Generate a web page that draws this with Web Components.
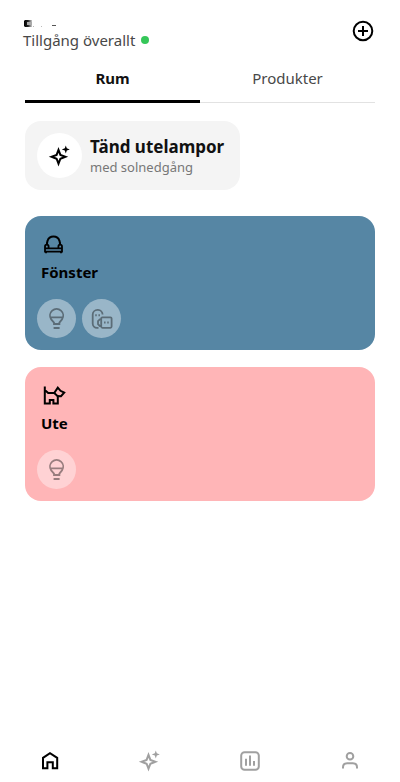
<!DOCTYPE html>
<html lang="sv">
<head>
<meta charset="utf-8">
<meta name="viewport" content="width=device-width, initial-scale=1">
<title>Hem</title>
<style>
  html, body { margin: 0; background: #fff; }
  body { font-family: "Noto Sans", sans-serif; color: #111; }
</style>
</head>
<body>
<home-app></home-app>
<script>
const ICONS = {
  plus: '<circle cx="12" cy="12" r="9.3"/><path d="M12 7v10M7 12h10"/>',
  sparkle: '<path d="M10.5 5.9 12.4 10.9 17.4 12.8 12.4 14.7 10.5 19.7 8.6 14.7 3.6 12.8 8.6 10.9Z"/><path fill="currentColor" stroke="none" d="M17.8 1.4 18.8 4.3 21.8 5.4 18.8 6.5 17.8 9.4 16.8 6.5 13.8 5.4 16.8 4.3Z"/>',
  armchair: '<path d="M6.2 13a6.2 6.2 0 0 1 .3-4A6.3 6.3 0 0 1 18.5 9a6.2 6.2 0 0 1 .3 4"/><path stroke-width="1.8" d="M4 19.6v-5.2a1.8 1.8 0 0 1 3.6 0v2h9.8v-2a1.8 1.8 0 0 1 3.6 0v5.2ZM4 16.4h17M5 19v2.2M20 19v2.2"/>',
  dog: '<path d="M3.8 3.6V20.4H8.8V17h3.6v3.4h4.4V13l3.2.2 3.2-3.6-3.7-1.8-2.7-3.1-3.6 5.4H7.2L3.8 7"/><path d="m13.2 10.1 3.6 3.2"/>',
  bulb: '<g stroke-width="1.8"><path d="M9 17v-1.4L6.2 12.4A6.6 6.6 0 1 1 17 12.4L14.4 15.6V17ZM5 10.3h13.2M8.6 21h6"/></g>',
  plug: '<g stroke-width="1.8"><path d="M8.5 20.8H7A4.3 4.3 0 0 1 2.7 16.5V7.7A4.8 4.8 0 0 1 7.5 2.9h.5A4.8 4.8 0 0 1 12.6 7.5"/><rect x="11.2" y="10.4" width="10.4" height="10.4" rx="1.2"/><path d="M11.2 12.4H9.8l-1.8 1.8v3l1.8 1.8h1.4"/><path stroke-width="1.5" d="M6 7.3v2M9.2 7.3v2M14.8 14.6v2M18 14.6v2"/></g>',
  home: '<path d="M5 19.2V8.8L12 4.1l7.2 4.7V19.2h-4.4v-6H9.4v6Z"/>',
  chart: '<rect x="3.2" y="3.2" width="17.6" height="17.6" rx="3.4"/><path d="M8 9.7v7M12 6.5v10.2M16 11.9v4.8"/>',
  person: '<circle cx="12" cy="7.2" r="3.3"/><path d="M5 19.5v-1.3c0-2.4 1.8-4 4.2-4h5.6c2.4 0 4.2 1.6 4.2 4v1.3"/>'
};

function define(name, html) {
  const template = document.createElement('template');
  template.innerHTML = html;
  customElements.define(name, class extends HTMLElement {
    constructor() {
      super();
      this.attachShadow({ mode: 'open' }).append(template.content.cloneNode(true));
    }
  });
}

customElements.define('ui-icon', class extends HTMLElement {
  constructor() {
    super();
    this.attachShadow({ mode: 'open' });
  }
  connectedCallback() {
    this.shadowRoot.innerHTML = `
      <style>
        :host { display: block; flex: none; width: 24px; height: 24px; }
        svg { display: block; width: 100%; height: 100%; overflow: visible; }
      </style>
      <svg viewBox="0 0 24 24" fill="none" stroke="currentColor" stroke-width="2" aria-hidden="true">${ICONS[this.getAttribute('name')]}</svg>`;
  }
});

define('home-header', `
  <style>
    :host { display: flex; justify-content: space-between; padding: 19px 25px 0 23px; }
    svg { display: block; width: 50px; height: 10px; }
    .status { display: flex; align-items: center; gap: 6px; font-size: 15px; line-height: 22px; color: #484848; }
    .dot { width: 8px; height: 8px; border-radius: 50%; background: #35c759; }
    button { align-self: flex-start; margin: 0; padding: 0; border: 0; background: none; color: #000; }
  </style>
  <div>
    <svg viewBox="0 0 50 10" aria-hidden="true">
      <defs>
        <linearGradient id="fade"><stop offset="0" stop-color="#000"/><stop offset=".5" stop-color="#222"/><stop offset="1" stop-color="#ccc"/></linearGradient>
      </defs>
      <path d="M1 2 2 1h7v7H2L1 7Z" fill="url(#fade)"/>
      <path d="M4 3h5v3H4Z" fill="#aaa"/>
      <path d="M10 7h1v1h-1ZM18 7h1v1h-1Z" fill="#bbb"/>
      <path d="M29 6h4v1h-4Z" fill="#555"/>
    </svg>
    <div class="status"><span>Tillgång överallt</span><span class="dot"></span></div>
  </div>
  <button type="button" aria-label="Lägg till"><ui-icon name="plus"></ui-icon></button>`);

define('home-tabs', `
  <style>
    :host { display: block; padding: 11px 25px 0; }
    div { display: grid; grid-template-columns: 1fr 1fr; }
    button { margin: 0; padding: 6px 0 11px; border: 0; border-bottom: 3px solid transparent; background: linear-gradient(#e2e2e2, #e2e2e2) bottom / 100% 1px no-repeat border-box; font: 15px/21px "Noto Sans", sans-serif; color: #484848; }
    button[aria-selected="true"] { font-weight: 700; color: #111; border-color: #000; }
  </style>
  <div role="tablist">
    <button type="button" role="tab" aria-selected="true">Rum</button>
    <button type="button" role="tab" aria-selected="false">Produkter</button>
  </div>`);

define('scene-card', `
  <style>
    :host { display: block; }
    button { display: flex; align-items: center; gap: 8px; margin: 0; padding: 12px 16px 12px 12px; border: 0; border-radius: 16px; background: #f4f4f4; font-family: inherit; text-align: left; color: #111; }
    .round { display: grid; place-items: center; width: 45px; height: 45px; border-radius: 50%; background: #fff; color: #000; }
    .text { display: grid; }
    .title { font-size: 17px; line-height: 23px; font-weight: 700; }
    .sub { font-size: 13px; line-height: 19px; color: #777; }
  </style>
  <button type="button">
    <span class="round"><ui-icon name="sparkle"></ui-icon></span>
    <span class="text"><span class="title"><slot></slot></span><span class="sub"><slot name="when"></slot></span></span>
  </button>`);

define('room-card', `
  <style>
    :host { display: block; padding: 16px 12px 12px; border-radius: 16px; background: var(--room); color: #000; }
    .head { padding: 0 4px; }
    h2 { margin: 4px 0 0; font-size: 15px; line-height: 24px; font-weight: 700; }
    .devices { display: flex; gap: 6px; padding-top: 15px; }
  </style>
  <div class="head"><slot name="icon"></slot><h2><slot></slot></h2></div>
  <div class="devices"><slot name="device"></slot></div>`);

define('device-button', `
  <style>
    :host { display: block; }
    button { display: grid; place-items: center; width: 39px; height: 39px; margin: 0; padding: 0; border: 0; border-radius: 50%; background: rgba(255, 255, 255, .4); color: #000; }
    .glyph { opacity: .4; }
  </style>
  <button type="button" aria-label="Enhet"><span class="glyph"><slot></slot></span></button>`);

define('bottom-nav', `
  <style>
    :host { display: block; }
    nav { display: grid; grid-template-columns: repeat(4, 1fr); }
    a { display: grid; place-items: center; padding: 9px 0; color: #a0a0a0; }
    a[aria-current] { color: #000; }
  </style>
  <nav>
    <a href="#hem" aria-label="Hem" aria-current="page"><ui-icon name="home"></ui-icon></a>
    <a href="#scener" aria-label="Scener"><ui-icon name="sparkle"></ui-icon></a>
    <a href="#statistik" aria-label="Statistik"><ui-icon name="chart"></ui-icon></a>
    <a href="#profil" aria-label="Profil"><ui-icon name="person"></ui-icon></a>
  </nav>`);

define('home-app', `
  <style>
    :host { display: flex; flex-direction: column; min-height: 100vh; }
    main { flex: 1; display: flex; flex-direction: column; padding: 18px 25px 0; }
    scene-card { align-self: flex-start; }
    .rooms { display: grid; gap: 17px; padding-top: 26px; }
    .blue { --room: #5686a4; }
    .pink { --room: #ffb5b7; }
  </style>
  <home-header></home-header>
  <home-tabs></home-tabs>
  <main>
    <scene-card>Tänd utelampor<span slot="when">med solnedgång</span></scene-card>
    <div class="rooms">
      <room-card class="blue"><ui-icon slot="icon" name="armchair"></ui-icon>Fönster
        <device-button slot="device"><ui-icon name="bulb"></ui-icon></device-button>
        <device-button slot="device"><ui-icon name="plug"></ui-icon></device-button>
      </room-card>
      <room-card class="pink"><ui-icon slot="icon" name="dog"></ui-icon>Ute
        <device-button slot="device"><ui-icon name="bulb"></ui-icon></device-button>
      </room-card>
    </div>
  </main>
  <bottom-nav></bottom-nav>`);
</script>
</body>
</html>
